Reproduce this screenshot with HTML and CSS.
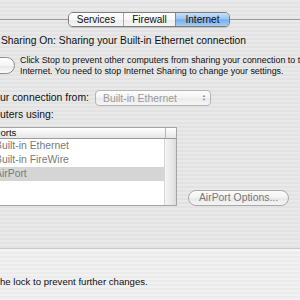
FILE: index.html
```html
<!DOCTYPE html>
<html>
<head>
<meta charset="utf-8">
<link rel="stylesheet" href="styles.css">
</head>
<body>
<div class="window">
  <div class="pane">
    <div class="tabrow">
      <div class="tabs">
        <div class="tab tab-first">Services</div>
        <div class="tab">Firewall</div>
        <div class="tab tab-last tab-active">Internet</div>
      </div>
    </div>
    <div class="status">Sharing On: Sharing your Built-in Ethernet connection</div>
    <div class="stoprow">
      <div class="stopbtn"></div>
      <div class="desc">Click Stop to prevent other computers from sharing your connection to the<br>Internet. You need to stop Internet Sharing to change your settings.</div>
    </div>
    <div class="fromrow">
      <span class="label">ur connection from:</span>
      <div class="popup">
        <span class="popup-text">Built-in Ethernet</span>
        <span class="popup-arrows"><span>&#9650;</span><span>&#9660;</span></span>
      </div>
    </div>
    <div class="label using">uters using:</div>
    <div class="listrow">
      <div class="list">
        <div class="list-head">
          <div class="head-cell">Ports</div>
          <div class="head-corner"></div>
        </div>
        <div class="list-body">
          <div class="rows">
            <div class="row">Built-in Ethernet</div>
            <div class="row">Built-in FireWire</div>
            <div class="row row-sel">AirPort</div>
          </div>
          <div class="scroll"></div>
        </div>
      </div>
      <div class="optbtn">AirPort Options...</div>
    </div>
  </div>
  <div class="footer">
    <div class="lockmsg">he lock to prevent further changes.</div>
  </div>
</div>
</body>
</html>
```
FILE: styles.css
```css
html, body {
  margin: 0;
  padding: 0;
}
body {
  width: 300px;
  height: 300px;
  overflow: hidden;
  font-family: "Liberation Sans", Arial, sans-serif;
  color: #111;
}
.window {
  display: flex;
  flex-direction: column;
  width: 300px;
  height: 300px;
}
.pane {
  height: 248px;
  border-bottom: 1px solid #c9c9c9;
  background: repeating-linear-gradient(to bottom, #e9e9e9 0, #e9e9e9 2px, #e2e2e2 2px, #e2e2e2 4px);
  display: flex;
  flex-direction: column;
}
.footer {
  flex: 1;
  background: repeating-linear-gradient(to bottom, #f1f1f1 0, #f1f1f1 2px, #ebebeb 2px, #ebebeb 4px);
  border-top: 1px solid #f6f6f6;
}
.tabrow {
  margin-top: 12px;
  height: 15px;
  padding-left: 68px;
  background: linear-gradient(to bottom, transparent 7px, #9a9a9a 7px, #9a9a9a 8px, transparent 8px);
  display: flex;
}
.tabs {
  display: flex;
  height: 15px;
  box-sizing: border-box;
  border: 1px solid #7d7d7d;
  border-radius: 5px;
  overflow: hidden;
  box-shadow: 0 1px 1px rgba(0,0,0,0.15);
}
.tab {
  font-size: 10px;
  line-height: 13px;
  text-align: center;
  background: linear-gradient(to bottom, #ffffff 0, #f7f7f7 50%, #ebebeb 51%, #f6f6f6 100%);
  border-left: 1px solid #a9a9a9;
  color: #111;
}
.tab-first { width: 54px; border-left: none; }
.tab:nth-child(2) { width: 51px; }
.tab-last { width: 53px; }
.tab-active {
  background: linear-gradient(to bottom, #c9e0f8 0, #9cc5f0 45%, #79adea 52%, #a5cdf5 100%);
  border-left: 1px solid #6a8fc0;
}
.status {
  margin-top: 7px;
  font-size: 10.3px;
  line-height: 14px;
  padding-left: 1px;
}
.stoprow {
  display: flex;
  align-items: flex-start;
  margin-top: 7px;
}
.stopbtn {
  flex: none;
  width: 40px;
  height: 17px;
  margin-left: -25px;
  margin-top: 2px;
  box-sizing: border-box;
  border: 1px solid #8c8c8c;
  border-radius: 9px;
  background: linear-gradient(to bottom, #ffffff 0, #f4f4f4 50%, #e6e6e6 51%, #fbfbfb 100%);
}
.desc {
  margin-left: 5px;
  font-size: 8.9px;
  line-height: 10.5px;
  white-space: nowrap;
}
.fromrow {
  display: flex;
  align-items: center;
  margin-top: 14px;
  height: 16px;
}
.label {
  font-size: 10.4px;
  line-height: 14px;
}
.popup {
  margin-left: 6px;
  width: 116px;
  height: 16px;
  box-sizing: border-box;
  border: 1px solid #b4b4b4;
  border-radius: 4px;
  background: linear-gradient(to bottom, #fdfdfd 0, #f3f3f3 50%, #ebebeb 51%, #f6f6f6 100%);
  display: flex;
  align-items: center;
  justify-content: space-between;
  padding: 0 4px 0 7px;
}
.popup-text {
  font-size: 10.4px;
  color: #9a9a9a;
}
.popup-arrows {
  display: flex;
  flex-direction: column;
  font-size: 4px;
  line-height: 4px;
  color: #8a8a8a;
}
.using {
  margin-top: 2px;
}
.listrow {
  display: flex;
  align-items: flex-end;
  margin-top: 5px;
}
.list {
  width: 188px;
  margin-left: -11px;
  box-sizing: border-box;
  border: 1px solid #a4a4a4;
  background: #fff;
}
.list-head {
  display: flex;
  height: 10px;
  border-bottom: 1px solid #9a9a9a;
  background: linear-gradient(to bottom, #ffffff 0, #f2f2f2 50%, #e6e6e6 100%);
}
.head-cell {
  flex: 1;
  font-size: 9.6px;
  line-height: 10px;
  padding-left: 4px;
  border-right: 1px solid #b8b8b8;
}
.head-corner {
  width: 10px;
}
.list-body {
  display: flex;
  height: 66px;
}
.rows {
  flex: 1;
}
.row {
  height: 14px;
  font-size: 10.4px;
  line-height: 14px;
  color: #7a7a7a;
  padding-left: 5px;
}
.row-sel {
  background: #d5d5d5;
}
.scroll {
  width: 11px;
  border-left: 1px solid #d6d6d6;
  background: linear-gradient(to right, #f4f4f4, #e6e6e6 70%, #dadada);
}
.optbtn {
  margin-left: 11px;
  margin-bottom: 0;
  width: 101px;
  height: 16px;
  box-sizing: border-box;
  border: 1px solid #a9a9a9;
  border-radius: 8px;
  background: linear-gradient(to bottom, #fcfcfc 0, #f2f2f2 50%, #e9e9e9 51%, #f4f4f4 100%);
  font-size: 10.4px;
  line-height: 14px;
  text-align: center;
  color: #777;
}
.lockmsg {
  margin-top: 26px;
  font-size: 9.6px;
  line-height: 12px;
}
```
